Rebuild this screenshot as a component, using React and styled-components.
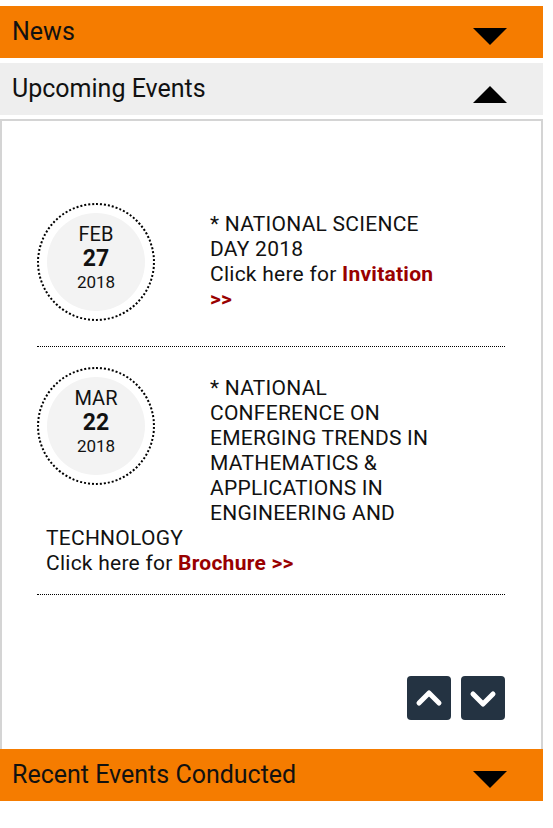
import React from "react";
import styled, { createGlobalStyle } from "styled-components";

const GlobalStyle = createGlobalStyle`
  body {
    margin: 0;
    background: #fff;
    font-family: Roboto, "Liberation Sans", sans-serif;
  }
`;

const events = [
  {
    month: "FEB",
    day: "27",
    year: "2018",
    title: "* NATIONAL SCIENCE DAY 2018",
    link: "Invitation >>",
  },
  {
    month: "MAR",
    day: "22",
    year: "2018",
    title:
      "* NATIONAL CONFERENCE ON EMERGING TRENDS IN MATHEMATICS & APPLICATIONS IN ENGINEERING AND TECHNOLOGY",
    link: "Brochure >>",
  },
];

const Triangle = ({ up }) => (
  <Arrow viewBox="0 0 34 17" $up={up}>
    <polygon points={up ? "0,17 17,0 34,17" : "0,0 34,0 17,17"} fill="#000" />
  </Arrow>
);

export default function App() {
  return (
    <>
      <GlobalStyle />
      <Accordion>
        <Header $tone="orange">
          <span>News</span>
          <Triangle />
        </Header>
        <Header $tone="gray">
          <span>Upcoming Events</span>
          <Triangle up />
        </Header>
        <Panel>
          <List>
            {events.map((ev) => (
              <Item key={ev.day}>
                <DateBadge>
                  <DateText>
                    <Month>{ev.month}</Month>
                    <Day>{ev.day}</Day>
                    <Year>{ev.year}</Year>
                  </DateText>
                </DateBadge>
                <Text>
                  {ev.title}
                  <br />
                  Click here for <LinkText href="#">{ev.link}</LinkText>
                </Text>
              </Item>
            ))}
          </List>
          <Controls>
            <NavBtn aria-label="up">
              <svg width="30" height="30" viewBox="0 0 30 30">
                <polyline points="5,20 15,10 25,20" fill="none" stroke="#fff" strokeWidth="5" strokeLinecap="round" strokeLinejoin="round" />
              </svg>
            </NavBtn>
            <NavBtn aria-label="down">
              <svg width="30" height="30" viewBox="0 0 30 30">
                <polyline points="5,11 15,21 25,11" fill="none" stroke="#fff" strokeWidth="5" strokeLinecap="round" strokeLinejoin="round" />
              </svg>
            </NavBtn>
          </Controls>
        </Panel>
        <Header $tone="orange">
          <span>Recent Events Conducted</span>
          <Triangle />
        </Header>
      </Accordion>
    </>
  );
}

const Accordion = styled.div`
  width: 543px;
  padding-top: 6px;
`;

const Header = styled.div`
  height: 52px;
  display: flex;
  align-items: center;
  justify-content: space-between;
  padding: 0 36px 0 12px;
  margin-bottom: 5px;
  background: ${(p) => (p.$tone === "orange" ? "#f57c00" : "#eeeeee")};
  color: #111;
  font-size: 25px;
  box-sizing: border-box;
  span {
    margin-top: -2px;
  }
  &:last-child {
    margin-bottom: 0;
  }
`;

const Arrow = styled.svg`
  width: 34px;
  height: 17px;
  margin-top: ${(p) => (p.$up ? "10px" : "8px")};
`;

const Panel = styled.div`
  border: 2px solid #d4d4d4;
  border-bottom: none;
  margin-top: -1px;
  padding: 62px 36px 29px 35px;
`;

const List = styled.div`
  display: flex;
  flex-direction: column;
`;

const Item = styled.div`
  padding: 20px 0 5px;
  border-bottom: 1px dotted #000;
  &::after {
    content: "";
    display: block;
    clear: both;
  }
`;

const DateBadge = styled.div`
  float: left;
  width: 118px;
  height: 118px;
  box-sizing: border-box;
  border: 2px dotted #000;
  border-radius: 50%;
  padding: 8px;
  background: #f3f3f3;
  background-clip: content-box;
  margin: 0 55px 20px 0;
  display: flex;
  align-items: center;
  justify-content: center;
  color: #111;
`;

const DateText = styled.div`
  display: flex;
  flex-direction: column;
  align-items: center;
  margin-bottom: 9px;
`;

const Month = styled.span`
  font-size: 20px;
  line-height: 20px;
  margin-bottom: 3px;
`;

const Day = styled.span`
  font-size: 23px;
  line-height: 23px;
  font-weight: 700;
  margin-bottom: 4px;
`;

const Year = styled.span`
  font-size: 17px;
  line-height: 17px;
`;

const Text = styled.p`
  margin: 0;
  padding: 9px 60px 13px 9px;
  font-size: 21px;
  letter-spacing: 0.25px;
  line-height: 25px;
  color: #111;
`;

const LinkText = styled.a`
  color: #990000;
  font-weight: 700;
  text-decoration: none;
`;

const Controls = styled.div`
  display: flex;
  justify-content: flex-end;
  gap: 10px;
  margin-top: 81px;
`;

const NavBtn = styled.button`
  width: 44px;
  height: 44px;
  border: none;
  border-radius: 4px;
  background: #243342;
  padding: 0;
  display: flex;
  align-items: center;
  justify-content: center;
  cursor: pointer;
`;
